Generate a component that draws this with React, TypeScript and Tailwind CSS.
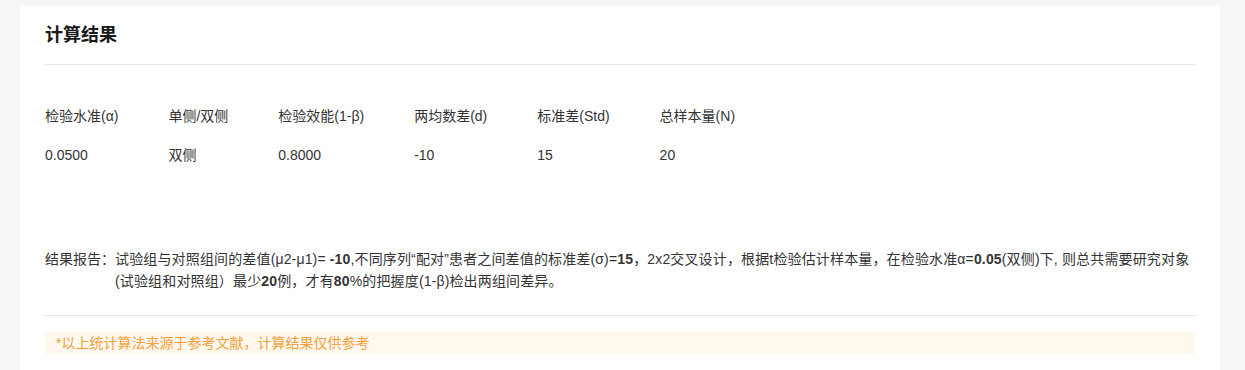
import React from 'react';

const params = [
  { label: '检验水准(α)', value: '0.0500' },
  { label: '单侧/双侧', value: '双侧' },
  { label: '检验效能(1-β)', value: '0.8000' },
  { label: '两均数差(d)', value: '-10' },
  { label: '标准差(Std)', value: '15' },
  { label: '总样本量(N)', value: '20' },
];

export default function App() {
  return (
    <div
      className="min-h-screen bg-[#f5f6f8] pt-[6px] pl-[20px] pr-[25px] text-[#333]"
      style={{ fontFamily: '"Liberation Sans", Arial, "Noto Sans CJK SC", sans-serif' }}
    >
      <div className="bg-white px-[25px] pt-[16px] pb-[20px] min-h-[364px]">
        {/* header */}
        <h2 className="text-[18px] leading-[26px] font-bold text-[#1a1a1a]">计算结果</h2>
        <div className="mt-[16px] h-px bg-[#e8e8e8]" />

        {/* parameters */}
        <div className="mt-[41px] flex gap-[50px] text-[14px] leading-[20px]">
          {params.map(p => (
            <div key={p.label} className="flex flex-col gap-[19px]">
              <span>{p.label}</span>
              <span>{p.value}</span>
            </div>
          ))}
        </div>

        {/* report */}
        <div className="mt-[83px] flex text-[14px] leading-[22px]">
          <span className="shrink-0 w-[70px]">结果报告：</span>
          <p className="flex-1 tracking-[0.15px]">
            试验组与对照组间的差值(μ2-μ1)= <b>-10</b>,不同序列“配对”患者之间差值的标准差(σ)=<b>15</b>，2x2交叉设计，根据t检验估计样本量，在检验水准α=<b>0.05</b>(双侧)下, 则总共需要研究对象<span className="whitespace-nowrap">(试验组和对照组）</span>最少<b>20</b>例，才有<b>80</b>%的把握度(1-β)检出两组间差异。
          </p>
        </div>

        <div className="mt-[23px] h-px bg-[#e6e6e6]" />

        {/* footnote */}
        <div className="mt-[16px] bg-[#fff8ef] px-[11px] text-[14px] leading-[22px] text-[#f5a03c]">
          *以上统计算法来源于参考文献，计算结果仅供参考
        </div>
      </div>
    </div>
  );
}
